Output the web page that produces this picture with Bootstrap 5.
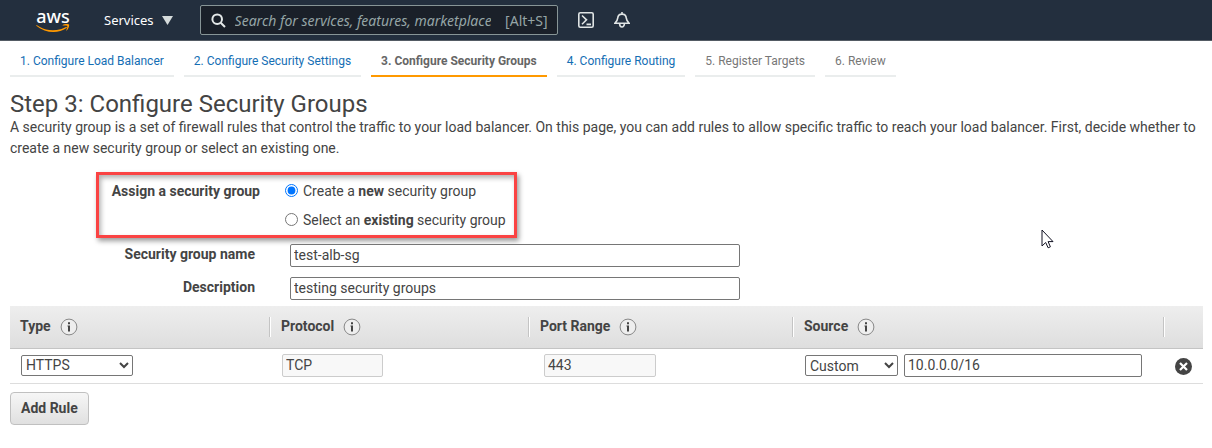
<!DOCTYPE html>
<html lang="en">
<head>
<meta charset="utf-8">
<meta name="viewport" content="width=device-width, initial-scale=1">
<title>Configure Security Groups</title>
<link href="https://cdn.jsdelivr.net/npm/bootstrap@5.3.0/dist/css/bootstrap.min.css" rel="stylesheet">
<style>
body { font: 14px/21px Roboto, "Liberation Sans", sans-serif; color: #444; background: #fff; }
.console-bar { background: #232f3e; border-bottom: 1px solid #545b64; height: 41px; font-family: "Noto Sans", sans-serif; padding-left: 36px; }
.brand-link, .brand-link svg { display: block; }
.brand-link { color: #fff; font-size: 18px; line-height: 16px; font-weight: 500; text-align: center; text-decoration: none; width: 34px; }
.services-btn { color: #fff; font-size: 13px; line-height: 20px; margin-left: 34px; margin-right: 27px; }
.search-box { width: 358px; height: 30px; background: #1a2029; border: 1px solid #879596; border-radius: 2px; padding: 0 9px 0 10px; color: #95a5a6; font-size: 14px; }
.search-box input { background: transparent; border: 0; outline: 0; padding: 0; margin-left: 9px; margin-right: 14px; min-width: 0; color: #fff; }
.search-box input::placeholder { color: #95a5a6; font-style: italic; opacity: 1; }
.icon-btn { border: 0; background: none; padding: 0; line-height: 0; }
.steps { padding: 10px 10px 0; gap: 10px; font-size: 12px; line-height: 20px; }
.steps .step { display: block; padding: 0 10px 4px; border-bottom: 2px solid #eaeded; color: #777; text-decoration: none; }
.steps a.step { color: #146eb4; }
.steps .current { font-weight: 700; border-color: #ff9900; color: #666; }
.page { padding: 14px 9px 20px 10px; }
h1 { font-size: 24px; line-height: 26px; font-weight: 400; margin: 0; }
.intro { margin: 0 0 13px; }
b, .field-name, .rules th { font-weight: 700; }
.assign { width: 421px; margin-left: 86px; padding: 6px 0 4px; border: 3px solid #fa4343; box-shadow: 2px 3px 5px rgba(0,0,0,.4), inset 2px 3px 5px rgba(0,0,0,.3); gap: 25px; }
.assign .group-name { width: 161px; font-weight: 700; text-align: right; }
.assign input { width: 13px; height: 13px; margin: 0 5px 3px 0; }
.fields { padding-top: 6px; gap: 10px; }
.field-name { width: 245px; margin-right: 35px; line-height: 21px; text-align: right; }
.boxed { font: 14px/19px Roboto, sans-serif; color: #444; background: #fff; border: 1px solid #767676; border-radius: 2px; height: 23px; padding: 0 3px 1px; }
.boxed:disabled { background: #f8f8f8; border-color: #ccc; opacity: 1; }
.wide { width: 450px; max-width: 100%; }
select.boxed { height: 21px; padding: 0; line-height: 19px; }
.rules { width: 100%; table-layout: fixed; margin-top: 6px; }
.rules thead { background: linear-gradient(#eee, #dedede); }
.rules th { height: 42px; padding: 0; border-bottom: 1px solid #c4c4c4; }
.rules .head { height: 20px; padding-left: 11px; border-left: 1px solid #c4c4c4; box-shadow: inset 1px 0 #fff; gap: 9px; }
.rules th:first-child .head { border-left: 0; box-shadow: none; padding-left: 10px; }
.rules td { height: 35px; padding: 0 0 0 13px; border-bottom: 1px solid #ddd; vertical-align: middle; }
.rules td:first-child { padding-left: 11px; }
.rules td.port { padding-left: 16px; }
.rules td.remove { padding-left: 12px; }
.add-rule { font: 700 14px/21px Roboto, sans-serif; color: #444; background: linear-gradient(#f6f6f6, #e0e0e0); border: 1px solid #c0c0c0; border-radius: 4px; padding: 5px 10px; margin-top: 8px; }
.pointer { position: absolute; left: 1041px; top: 229px; pointer-events: none; }
</style>
</head>
<body>
<svg class="d-none" aria-hidden="true">
  <symbol id="info" viewBox="0 0 18 18"><circle cx="9" cy="9" r="7.9" fill="#eee" stroke="#888"/><path d="M8 4.2h2v2H8zM7.500 7.400H10v6.100H8V8.500h-.5z" fill="#444"/></symbol>
</svg>
<header class="console-bar d-flex align-items-center">
  <a class="brand-link" href="#" aria-label="AWS home">aws
    <svg width="34" height="9" viewBox="0 15 34 9">
      <path d="M1 16.200c9 6.200 20 6.600 29 1.800.8-.4 1.300.4.600 1C22 25 9 24 .600 16.900c-.5-.5-.1-1 .4-.7z" fill="#ff9900"/>
      <path d="M26.700 16c2.100-1.400 5.600-1.300 6.300-.5.500.8-.3 4.300-2.200 5.900-.4.300-.7.100-.5-.3.600-1.300 1.300-3.700.9-4.200-.5-.5-2.900-.4-4.200-.3-.5 0-.6-.3-.3-.6z" fill="#ff9900"/>
    </svg>
  </a>
  <button type="button" class="services-btn icon-btn d-flex align-items-center gap-1">Services
    <svg class="ms-1" width="11" height="9" viewBox="0 0 11 9"><path d="M0 0h11L5.500 9z" fill="#d5dbdb"/></svg></button>
  <div class="search-box d-flex align-items-center">
    <svg class="flex-shrink-0" width="15" height="15" viewBox="0 0 15 15" fill="none" stroke="#e4e8e8" stroke-width="2"><circle cx="6.200" cy="6.200" r="4.800"/><path d="m9.700 9.700 4.300 4.300"/></svg>
    <input class="flex-grow-1" type="text" aria-label="Search" placeholder="Search for services, features, marketplace products, and docs">
    <span>[Alt+S]</span>
  </div>
  <button type="button" class="icon-btn ms-3 ps-1" aria-label="CloudShell">
    <svg width="16" height="16" viewBox="0 0 16 16" fill="none" stroke="#e0e5e5" stroke-width="1.600"><rect x=".8" y=".8" width="14.400" height="14.400" rx="1.500"/><path d="m4 3.500 4.500 4.300L4 12.200M8.500 12.400H13"/></svg></button>
  <button type="button" class="icon-btn ms-3 ps-1" aria-label="Notifications">
    <svg width="16" height="16" viewBox="0 0 16 16" fill="none" stroke="#e0e5e5" stroke-width="1.600"><path d="M8 0v2M1 11.200h14c-2.200-1.800-2.500-3-2.700-5C12.100 3.500 10.300 2.100 8 2.100S3.900 3.500 3.700 6.200c-.2 2-.5 3.200-2.700 5zM5.600 11.500c0 4.600 4.800 4.600 4.800 0"/></svg></button>
</header>
<nav class="steps d-flex flex-wrap" aria-label="Steps">
  <a class="step" href="#">1. Configure Load Balancer</a>
  <a class="step" href="#">2. Configure Security Settings</a>
  <span class="step current" aria-current="step">3. Configure Security Groups</span>
  <a class="step" href="#">4. Configure Routing</a>
  <span class="step">5. Register Targets</span>
  <span class="step">6. Review</span>
</nav>
<main class="page">
  <h1>Step 3: Configure Security Groups</h1>
  <p class="intro">A security group is a set of firewall rules that control the traffic to your load balancer. On this page, you can add rules to allow specific traffic to reach your load balancer. First, decide whether to create a new security group or select an existing one.</p>
  <form>
    <div class="assign d-flex" role="radiogroup" aria-labelledby="assign-name">
      <div class="group-name" id="assign-name">Assign a security group</div>
      <div class="d-flex flex-column gap-2">
        <div class="d-flex align-items-center"><input type="radio" name="assign" id="new" checked><label for="new">Create a <b>new</b> security group</label></div>
        <div class="d-flex align-items-center"><input type="radio" name="assign" id="existing"><label for="existing">Select an <b>existing</b> security group</label></div>
      </div>
    </div>
    <div class="fields d-flex flex-column">
      <div class="d-flex"><label class="field-name" for="sg-name">Security group name</label><input class="boxed wide" id="sg-name" type="text" value="test-alb-sg"></div>
      <div class="d-flex"><label class="field-name" for="sg-desc">Description</label><input class="boxed wide" id="sg-desc" type="text" value="testing security groups"></div>
    </div>
    <table class="rules">
      <colgroup><col style="width:259px"><col style="width:259px"><col style="width:264px"><col style="width:371px"><col style="width:40px"></colgroup>
      <thead><tr>
        <th scope="col"><div class="head d-flex align-items-center">Type <svg width="18" height="18"><use href="#info"/></svg></div></th>
        <th scope="col"><div class="head d-flex align-items-center">Protocol <svg width="18" height="18"><use href="#info"/></svg></div></th>
        <th scope="col"><div class="head d-flex align-items-center">Port Range <svg width="18" height="18"><use href="#info"/></svg></div></th>
        <th scope="col"><div class="head d-flex align-items-center">Source <svg width="18" height="18"><use href="#info"/></svg></div></th>
        <th aria-label="Remove"><div class="head"></div></th>
      </tr></thead>
      <tbody><tr>
        <td><select class="boxed" style="width:112px" aria-label="Type"><option>HTTPS</option></select></td>
        <td><input class="boxed" style="width:101px" type="text" value="TCP" aria-label="Protocol" disabled></td>
        <td class="port"><input class="boxed" style="width:112px" type="text" value="443" aria-label="Port range" disabled></td>
        <td><div class="d-flex align-items-center"><select class="boxed" style="width:93px;margin-right:6px" aria-label="Source"><option>Custom</option></select><input class="boxed" style="width:238px" type="text" value="10.0.0.0/16" aria-label="Source range"></div></td>
        <td class="remove"><button type="button" class="icon-btn" aria-label="Remove rule"><svg width="17" height="17" viewBox="0 0 17 17"><circle cx="8.500" cy="8.500" r="8.500" fill="#444"/><path d="m5 5 7 7m0-7-7 7" stroke="#fff" stroke-width="2.200"/></svg></button></td>
      </tr></tbody>
    </table>
    <button type="button" class="add-rule">Add Rule</button>
  </form>
</main>
<svg class="pointer" width="13" height="20" viewBox="0 0 13 20"><path d="M1 1v16l3.700-3.500 2.400 5.300 2.300-1-2.300-5.200H12z" fill="#fff" stroke="#112"/></svg>
<script src="https://cdn.jsdelivr.net/npm/bootstrap@5.3.0/dist/js/bootstrap.bundle.min.js"></script>
</body>
</html>
